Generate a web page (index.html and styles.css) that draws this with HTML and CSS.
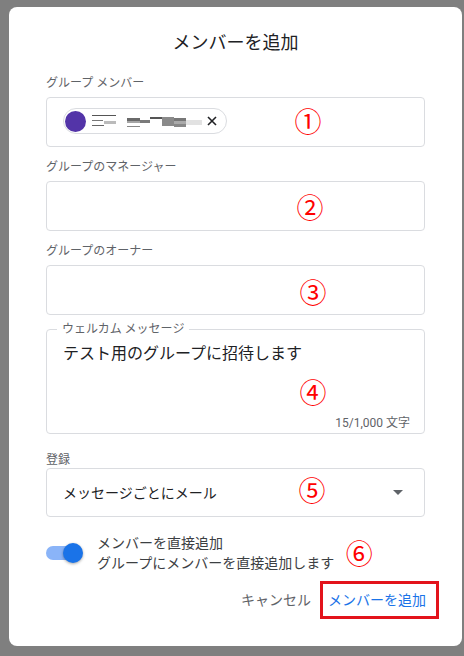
FILE: index.html
```html
<!DOCTYPE html>
<html lang="ja">

<head>
    <meta charset="UTF-8">
    <meta name="viewport" content="width=device-width, initial-scale=1.0">
    <title>メンバーを追加</title>
    <link rel="stylesheet" href="styles.css">
</head>

<body>
    <div class="dialog">
        <h1 class="dialog-title">メンバーを追加</h1>

        <!-- グループ メンバー -->
        <div class="group group-first">
            <div class="field-label">グループ メンバー</div>
            <div class="field">
                <span class="chip">
                    <span class="chip-avatar"></span>
                    <svg class="chip-name" width="112" height="14" viewBox="0 0 112 14">
                        <rect x="0" y="1" width="24" height="1" fill="#555"/>
                        <rect x="0" y="6" width="11" height="1" fill="#777"/>
                        <rect x="12" y="7" width="12" height="3" fill="#bbb"/>
                        <rect x="0" y="11" width="12" height="1" fill="#666"/>
                        <rect x="35" y="4" width="13" height="3" fill="#6a6a6a"/>
                        <rect x="35" y="7" width="13" height="2" fill="#a5a5a5"/>
                        <rect x="35" y="12" width="13" height="1" fill="#888"/>
                        <rect x="48" y="6" width="10" height="3" fill="#7a7a7a"/>
                        <rect x="58" y="3" width="12" height="2" fill="#555"/>
                        <rect x="70" y="3" width="12" height="9" fill="#8a8a8a"/>
                        <rect x="82" y="4" width="12" height="3" fill="#777"/>
                        <rect x="82" y="7" width="12" height="3" fill="#aaa"/>
                        <rect x="82" y="10" width="12" height="3" fill="#888"/>
                        <rect x="94" y="6" width="16" height="5" fill="#e2e2e2"/>
                    </svg>
                    <svg class="chip-close" width="10" height="10" viewBox="0 0 10 10">
                        <path d="M1 1L9 9M9 1L1 9" stroke="#202124" stroke-width="1.6" fill="none"/>
                    </svg>
                </span>
                <span class="mark mark-1">①</span>
            </div>
        </div>

        <!-- マネージャー -->
        <div class="group">
            <div class="field-label">グループのマネージャー</div>
            <div class="field">
                <span class="mark mark-2">②</span>
            </div>
        </div>

        <!-- オーナー -->
        <div class="group">
            <div class="field-label">グループのオーナー</div>
            <div class="field">
                <span class="mark mark-3">③</span>
            </div>
        </div>

        <!-- ウェルカム メッセージ -->
        <div class="field field-message">
            <span class="legend">ウェルカム メッセージ</span>
            <div class="message-text">テスト用のグループに招待します</div>
            <div class="message-count">15/1,000 文字</div>
            <span class="mark mark-4">④</span>
        </div>

        <!-- 登録 -->
        <div class="field-label label-sub">登録</div>
        <div class="field field-select">
            <span class="select-text">メッセージごとにメール</span>
            <span class="select-caret"></span>
            <span class="mark mark-5">⑤</span>
        </div>

        <!-- 直接追加 -->
        <div class="toggle-row">
            <span class="switch">
                <span class="switch-track"></span>
                <span class="switch-knob"></span>
            </span>
            <div class="toggle-text">
                <p>メンバーを直接追加</p>
                <p>グループにメンバーを直接追加します</p>
            </div>
            <span class="mark-inline">⑥</span>
        </div>

        <div class="actions">
            <button class="btn btn-cancel">キャンセル</button>
            <button class="btn btn-primary">メンバーを追加</button>
        </div>
    </div>
</body>

</html>
```

FILE: styles.css
```css
* {
    padding: 0;
    margin: 0;
    box-sizing: border-box;
}

body {
    width: 464px;
    height: 656px;
    overflow: hidden;
    background: #7f7f7f;
    font-family: Roboto, "Noto Sans CJK JP", sans-serif;
}

.dialog {
    width: 453px;
    height: 639px;
    margin: 7px 0 0 9px;
    padding: 24px 37px 0;
    background: #fff;
    border-radius: 8px;
}

.dialog-title {
    font-size: 18px;
    font-weight: 400;
    line-height: 24px;
    text-align: center;
    color: #202124;
}

.group {
    margin-top: 12px;
}

.group-first {
    margin-top: 20px;
}

.field-label {
    font-size: 12px;
    line-height: 16px;
    color: #5f6368;
    margin-bottom: 6px;
}

.field {
    position: relative;
    height: 50px;
    border: 1px solid #dadce0;
    border-radius: 4px;
    display: flex;
    align-items: center;
    padding-left: 16px;
}

/* chip */
.chip {
    display: inline-flex;
    align-items: center;
    height: 26px;
    border: 1px solid #dadce0;
    border-radius: 13px;
    padding: 0 9px 0 1px;
    margin-top: -2px;
}

.chip-avatar {
    width: 21px;
    height: 21px;
    border-radius: 50%;
    background: #5334a8;
}

.chip-name {
    display: block;
    margin-left: 6px;
}

.chip-close {
    display: block;
    margin-left: 3px;
}

/* 番号 */
.mark {
    position: absolute;
    width: 28px;
    font-size: 27px;
    line-height: 28px;
    text-align: center;
    color: #f00;
    font-family: "Noto Sans CJK JP", sans-serif;
}

.mark-1 { left: 247px; top: 9px; }
.mark-2 { left: 249px; top: 11px; }
.mark-3 { left: 252px; top: 12px; }
.mark-4 { left: 252px; top: 48px; }
.mark-5 { left: 251px; top: 7px; }

/* message */
.field-message {
    height: 105px;
    margin-top: 14px;
    display: flex;
    flex-direction: column;
    align-items: stretch;
    padding: 12px 14px 2px 16px;
}

.legend {
    position: absolute;
    top: -9px;
    left: 10px;
    padding: 0 5px;
    background: #fff;
    font-size: 12px;
    line-height: 16px;
    color: #5f6368;
}

.message-text {
    font-size: 16px;
    line-height: 24px;
    color: #202124;
}

.message-count {
    margin-top: auto;
    text-align: right;
    font-size: 12px;
    line-height: 16px;
    color: #5f6368;
}

/* select */
.label-sub {
    margin-top: 18px;
    margin-bottom: 0;
}

.field-select {
    height: 49px;
    padding-right: 21px;
}

.select-text {
    font-size: 14px;
    line-height: 24px;
    color: #202124;
}

.select-caret {
    margin-left: auto;
    width: 0;
    height: 0;
    border-left: 5px solid transparent;
    border-right: 5px solid transparent;
    border-top: 5px solid #5f6368;
}

/* toggle */
.toggle-row {
    display: flex;
    align-items: center;
    height: 40px;
    margin-top: 16px;
}

.switch {
    position: relative;
    width: 38px;
    height: 20px;
    display: block;
}

.switch-track {
    display: block;
    width: 34px;
    height: 14px;
    margin-top: 3px;
    border-radius: 7px;
    background: #8ab4f8;
}

.switch-knob {
    position: absolute;
    left: 17px;
    top: 0;
    width: 20px;
    height: 20px;
    border-radius: 50%;
    background: #1a73e8;
    box-shadow: 0 1px 3px rgba(0, 0, 0, 0.35);
}

.toggle-text {
    margin-left: 13px;
    font-size: 14px;
    line-height: 20px;
    color: #3c4043;
}

.mark-inline {
    margin-left: 11px;
    width: 28px;
    font-size: 27px;
    line-height: 28px;
    text-align: center;
    color: #f00;
    font-family: "Noto Sans CJK JP", sans-serif;
}

/* buttons */
.actions {
    display: flex;
    justify-content: flex-end;
    align-items: center;
    margin-top: 8px;
    margin-right: -14px;
}

.btn {
    background: none;
    border: none;
    font-family: inherit;
    font-size: 14px;
    line-height: 20px;
}

.btn-cancel {
    padding: 0 8px;
    margin-right: 1px;
    color: #5f6368;
}

.btn-primary {
    height: 38px;
    padding: 0 10px 0 5px;
    border: 3px solid #e3131b;
    color: #1a73e8;
}
```
